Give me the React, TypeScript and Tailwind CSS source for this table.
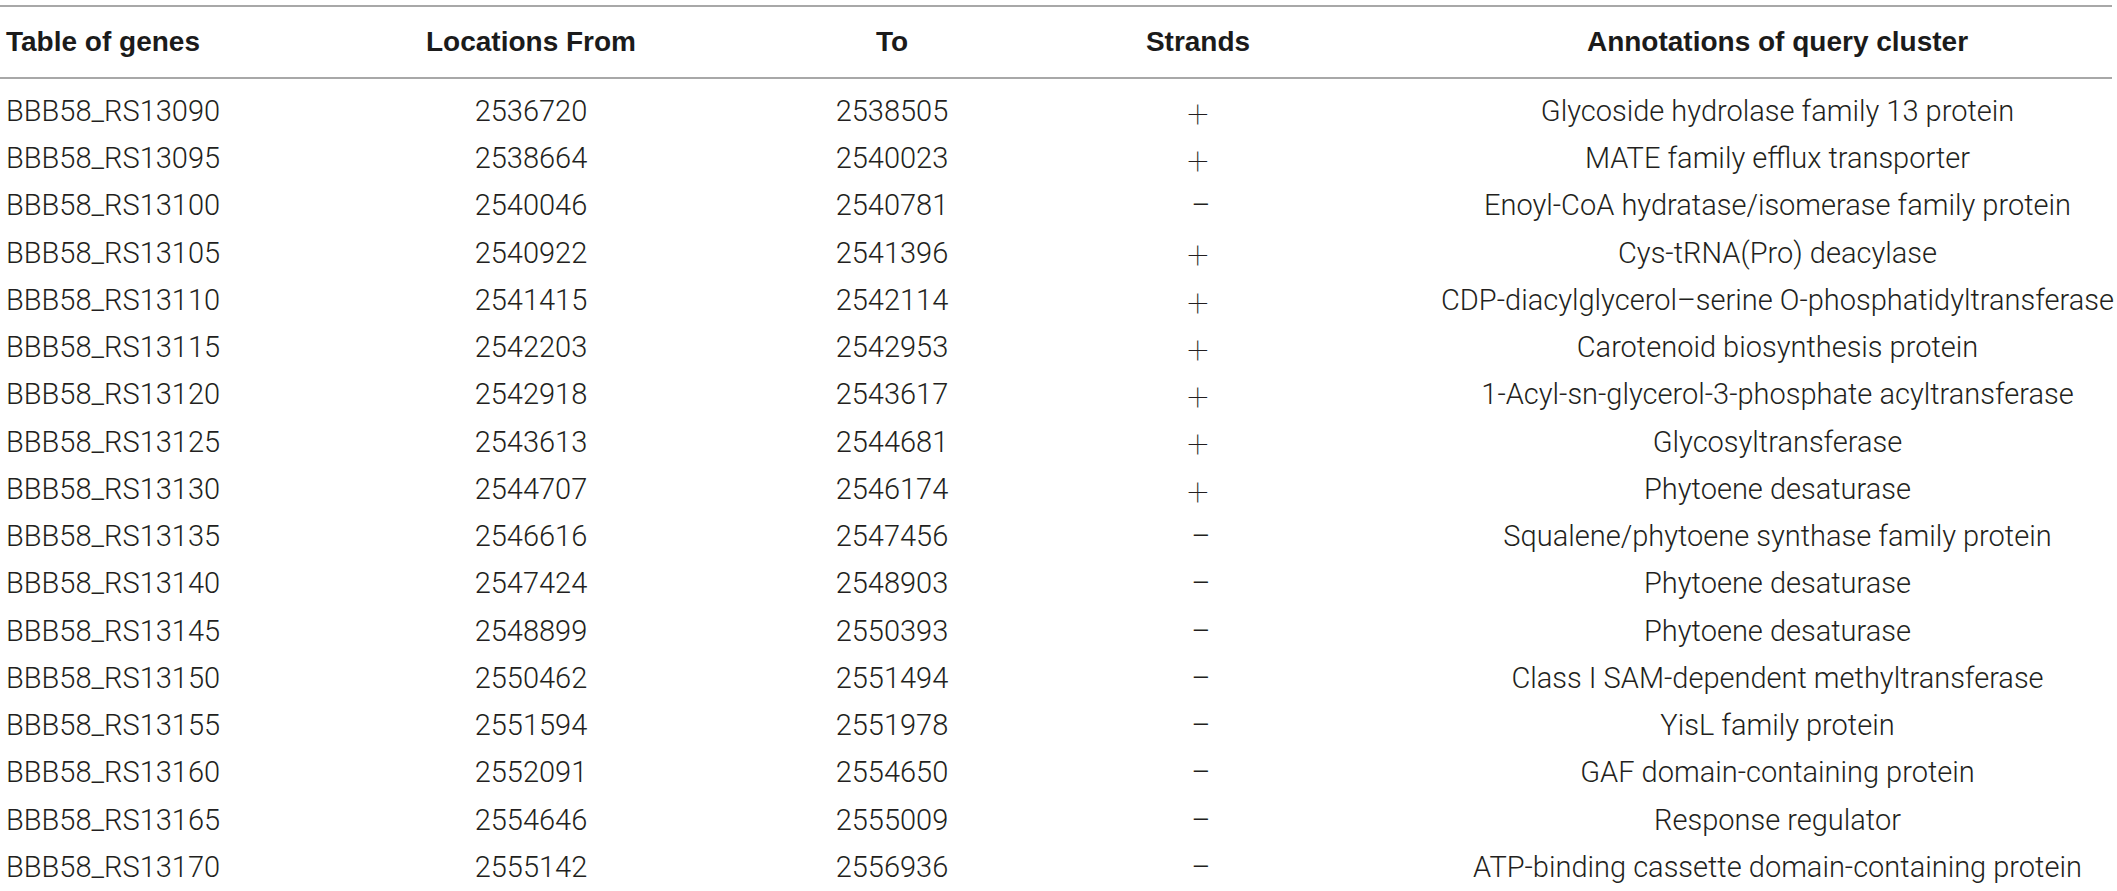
const genes = [
  { id: "BBB58_RS13090", from: "2536720", to: "2538505", strand: "+", note: "Glycoside hydrolase family 13 protein" },
  { id: "BBB58_RS13095", from: "2538664", to: "2540023", strand: "+", note: "MATE family efflux transporter" },
  { id: "BBB58_RS13100", from: "2540046", to: "2540781", strand: "–", note: "Enoyl-CoA hydratase/isomerase family protein" },
  { id: "BBB58_RS13105", from: "2540922", to: "2541396", strand: "+", note: "Cys-tRNA(Pro) deacylase" },
  { id: "BBB58_RS13110", from: "2541415", to: "2542114", strand: "+", note: "CDP-diacylglycerol–serine O-phosphatidyltransferase" },
  { id: "BBB58_RS13115", from: "2542203", to: "2542953", strand: "+", note: "Carotenoid biosynthesis protein" },
  { id: "BBB58_RS13120", from: "2542918", to: "2543617", strand: "+", note: "1-Acyl-sn-glycerol-3-phosphate acyltransferase" },
  { id: "BBB58_RS13125", from: "2543613", to: "2544681", strand: "+", note: "Glycosyltransferase" },
  { id: "BBB58_RS13130", from: "2544707", to: "2546174", strand: "+", note: "Phytoene desaturase" },
  { id: "BBB58_RS13135", from: "2546616", to: "2547456", strand: "–", note: "Squalene/phytoene synthase family protein" },
  { id: "BBB58_RS13140", from: "2547424", to: "2548903", strand: "–", note: "Phytoene desaturase" },
  { id: "BBB58_RS13145", from: "2548899", to: "2550393", strand: "–", note: "Phytoene desaturase" },
  { id: "BBB58_RS13150", from: "2550462", to: "2551494", strand: "–", note: "Class I SAM-dependent methyltransferase" },
  { id: "BBB58_RS13155", from: "2551594", to: "2551978", strand: "–", note: "YisL family protein" },
  { id: "BBB58_RS13160", from: "2552091", to: "2554650", strand: "–", note: "GAF domain-containing protein" },
  { id: "BBB58_RS13165", from: "2554646", to: "2555009", strand: "–", note: "Response regulator" },
  { id: "BBB58_RS13170", from: "2555142", to: "2556936", strand: "–", note: "ATP-binding cassette domain-containing protein" },
];

const cols = "grid grid-cols-[236px_590px_132px_480px_679px]";

function Cell({ children, left }: { children: React.ReactNode; left?: boolean }) {
  return (
    <div className={left ? "flex items-center pl-[6px] whitespace-nowrap" : "flex items-center justify-center whitespace-nowrap"}>
      {children}
    </div>
  );
}

export default function App() {
  return (
    <div className="w-[2117px] h-[891px] bg-white overflow-hidden pt-[5px]">
      <div className="w-[2112px] border-t-2 border-b-2 border-[#a8a8a8]">
        <div className={`${cols} h-[70px] text-[28px] font-bold text-[#1b1b1b]`} style={{ fontFamily: "'Liberation Sans', Arial, sans-serif" }}>
          <Cell left>Table of genes</Cell>
          <Cell>Locations From</Cell>
          <Cell>To</Cell>
          <Cell>Strands</Cell>
          <Cell>Annotations of query cluster</Cell>
        </div>
      </div>
      <div className="pt-[9px] text-[29px] font-light text-[#231f20]" style={{ fontFamily: "Roboto, 'Liberation Sans', sans-serif" }}>
        {genes.map((g) => (
          <div key={g.id} className={`${cols} h-[47.25px]`}>
            <Cell left>{g.id}</Cell>
            <Cell>{g.from}</Cell>
            <Cell>{g.to}</Cell>
            <Cell>
              {g.strand === "+" ? (
                <span className="text-[38px] font-thin leading-none pt-[4px]">+</span>
              ) : (
                <span className="pl-[6px]">–</span>
              )}
            </Cell>
            <Cell>{g.note}</Cell>
          </div>
        ))}
      </div>
    </div>
  );
}
